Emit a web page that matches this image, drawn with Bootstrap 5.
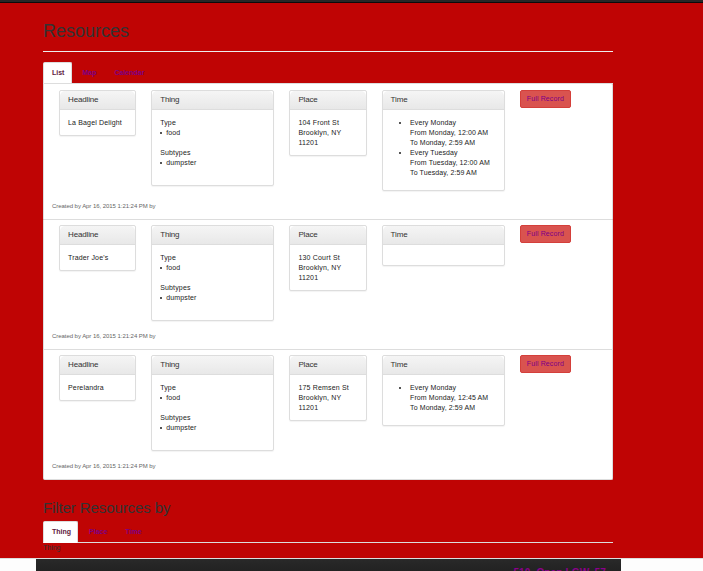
<!DOCTYPE html>
<html lang="en">
<head>
<meta charset="utf-8">
<title>Resources</title>
<link rel="stylesheet" href="https://cdn.jsdelivr.net/npm/bootstrap@5.3.0/dist/css/bootstrap.min.css">
<style>
html{overflow:hidden}
body{background:#bf0404;font:7px/10px "Liberation Sans",Arial,sans-serif;color:#333;height:571px;overflow:hidden}
.topbar{height:3px;background:#272727;border-bottom:1px solid #0b0b0b}
.page{width:570px;margin-left:43px;height:555px}
h1{font-size:18px;line-height:20px;margin:0;padding:18px 0 10px;height:49px;border-bottom:1px solid #eee;font-weight:400}
h2{font-size:15px;line-height:16px;margin:0;padding-top:20px;height:41px;letter-spacing:-.1px;font-weight:400}
.nav-tabs{--bs-nav-tabs-border-color:#ddd;--bs-nav-tabs-border-width:1px;height:22px;font-weight:700}
.nav-tabs .nav-link{padding:5px 7px 5px 8px;line-height:10px;height:22px;color:#7d0086;border-radius:2px 2px 0 0;margin-right:1px}
.nav-tabs .nav-link.active{color:#602040;background:#fff;border-color:#ddd #ddd #fff}
.filter-tabs .nav-link{padding-right:6px;margin-right:2px}
.first-tabs{margin-top:10px}
.list-group{--bs-list-group-border-color:#ddd;--bs-list-group-border-radius:2px;margin-top:-1px}
.list-group-item{padding:5px 7.5px 0;height:130px;color:#333}
.list-group-item:first-child{height:137px;padding-top:6px;border-top-left-radius:0}
.fields{height:107px}
.list-group-item:first-child .fields{height:112px}
.fields>div{padding:0 7.5px}
.card{border-color:#ddd;border-radius:2px;box-shadow:0 1px 1px rgba(0,0,0,.05);color:#222}
.card-header{padding:3px 8px 4px;height:19px;font-size:8px;line-height:11px;letter-spacing:-.15px;background:linear-gradient(#f5f5f5,#e8e8e8);border-color:#ddd;color:#333}
.card-body{padding:8px 8px 7px;letter-spacing:.16px;white-space:nowrap}
.place{letter-spacing:.18px}
.what{height:75px}
.when{padding-bottom:12px;min-height:20px}
.when ul{padding-left:19.5px;margin:0;letter-spacing:.1px}
.what ul{padding-left:6px;margin:0 0 10px}
.what li,.when li{list-style:none;position:relative}
.what li::before,.when li::before{content:"";position:absolute;width:2px;height:2px;background:#555;top:4px;left:-6px}
.when li::before{left:-11px}
.btn-danger{font-size:7px;line-height:10px;padding:3px 6px;height:18px;background:#d9534f;border-color:#d43f3a;border-radius:2px;color:#7d0086;letter-spacing:.12px;display:block;width:51px;white-space:nowrap}
.meta{font-size:6px;line-height:8px;color:#666;padding-left:.5px;letter-spacing:-.05px}
.foot{height:13px;background:#fdfdfd;border-top:1px solid #ddd}
.foot-inner{width:585px;height:12px;margin-left:36px;background:linear-gradient(#292929,#222);overflow:hidden}
.foot-inner a{font-size:10px;line-height:12px;font-weight:700;color:#8b008b;text-decoration:none;padding:8px 15px 0 0;letter-spacing:.15px}
</style>
<script src="https://cdn.jsdelivr.net/npm/bootstrap@5.3.0/dist/js/bootstrap.bundle.min.js"></script>
</head>
<body>
<div class="topbar"></div>
<main class="page">
<h1>Resources</h1>
<ul class="nav nav-tabs first-tabs">
<li class="nav-item"><a class="nav-link active" href="#">List</a></li>
<li class="nav-item"><a class="nav-link" href="#">Map</a></li>
<li class="nav-item"><a class="nav-link" href="#">Calendar</a></li>
</ul>
<div class="list-group">
<div class="list-group-item">
<div class="row g-0 fields align-items-start">
<div class="col-2"><div class="card"><div class="card-header">Headline</div><div class="card-body">La Bagel Delight</div></div></div>
<div class="col-3"><div class="card"><div class="card-header">Thing</div><div class="card-body what">Type<ul><li>food</li></ul>Subtypes<ul><li>dumpster</li></ul></div></div></div>
<div class="col-2"><div class="card"><div class="card-header">Place</div><div class="card-body place">104 Front St<br>Brooklyn, NY<br>11201</div></div></div>
<div class="col-3"><div class="card"><div class="card-header">Time</div><div class="card-body when"><ul><li>Every Monday<br>From Monday, 12:00 AM<br>To Monday, 2:59 AM</li><li>Every Tuesday<br>From Tuesday, 12:00 AM<br>To Tuesday, 2:59 AM</li></ul></div></div></div>
<div class="col-2"><a class="btn btn-danger" href="#">Full Record</a></div>
</div>
<div class="meta">Created by Apr 16, 2015 1:21:24 PM by</div>
</div>
<div class="list-group-item">
<div class="row g-0 fields align-items-start">
<div class="col-2"><div class="card"><div class="card-header">Headline</div><div class="card-body">Trader Joe's</div></div></div>
<div class="col-3"><div class="card"><div class="card-header">Thing</div><div class="card-body what">Type<ul><li>food</li></ul>Subtypes<ul><li>dumpster</li></ul></div></div></div>
<div class="col-2"><div class="card"><div class="card-header">Place</div><div class="card-body place">130 Court St<br>Brooklyn, NY<br>11201</div></div></div>
<div class="col-3"><div class="card"><div class="card-header">Time</div><div class="card-body when"></div></div></div>
<div class="col-2"><a class="btn btn-danger" href="#">Full Record</a></div>
</div>
<div class="meta">Created by Apr 16, 2015 1:21:24 PM by</div>
</div>
<div class="list-group-item">
<div class="row g-0 fields align-items-start">
<div class="col-2"><div class="card"><div class="card-header">Headline</div><div class="card-body">Perelandra</div></div></div>
<div class="col-3"><div class="card"><div class="card-header">Thing</div><div class="card-body what">Type<ul><li>food</li></ul>Subtypes<ul><li>dumpster</li></ul></div></div></div>
<div class="col-2"><div class="card"><div class="card-header">Place</div><div class="card-body place">175 Remsen St<br>Brooklyn, NY<br>11201</div></div></div>
<div class="col-3"><div class="card"><div class="card-header">Time</div><div class="card-body when"><ul><li>Every Monday<br>From Monday, 12:45 AM<br>To Monday, 2:59 AM</li></ul></div></div></div>
<div class="col-2"><a class="btn btn-danger" href="#">Full Record</a></div>
</div>
<div class="meta">Created by Apr 16, 2015 1:21:24 PM by</div>
</div>
</div>
<h2>Filter Resources by</h2>
<ul class="nav nav-tabs filter-tabs">
<li class="nav-item"><a class="nav-link active" href="#">Thing</a></li>
<li class="nav-item"><a class="nav-link" href="#">Place</a></li>
<li class="nav-item"><a class="nav-link" href="#">Time</a></li>
</ul>
<div class="filter-pane">Thing</div>
</main>
<footer class="foot"><div class="foot-inner d-flex justify-content-end"><a href="#">510. Open LGW, 57</a></div></footer>
</body>
</html>
